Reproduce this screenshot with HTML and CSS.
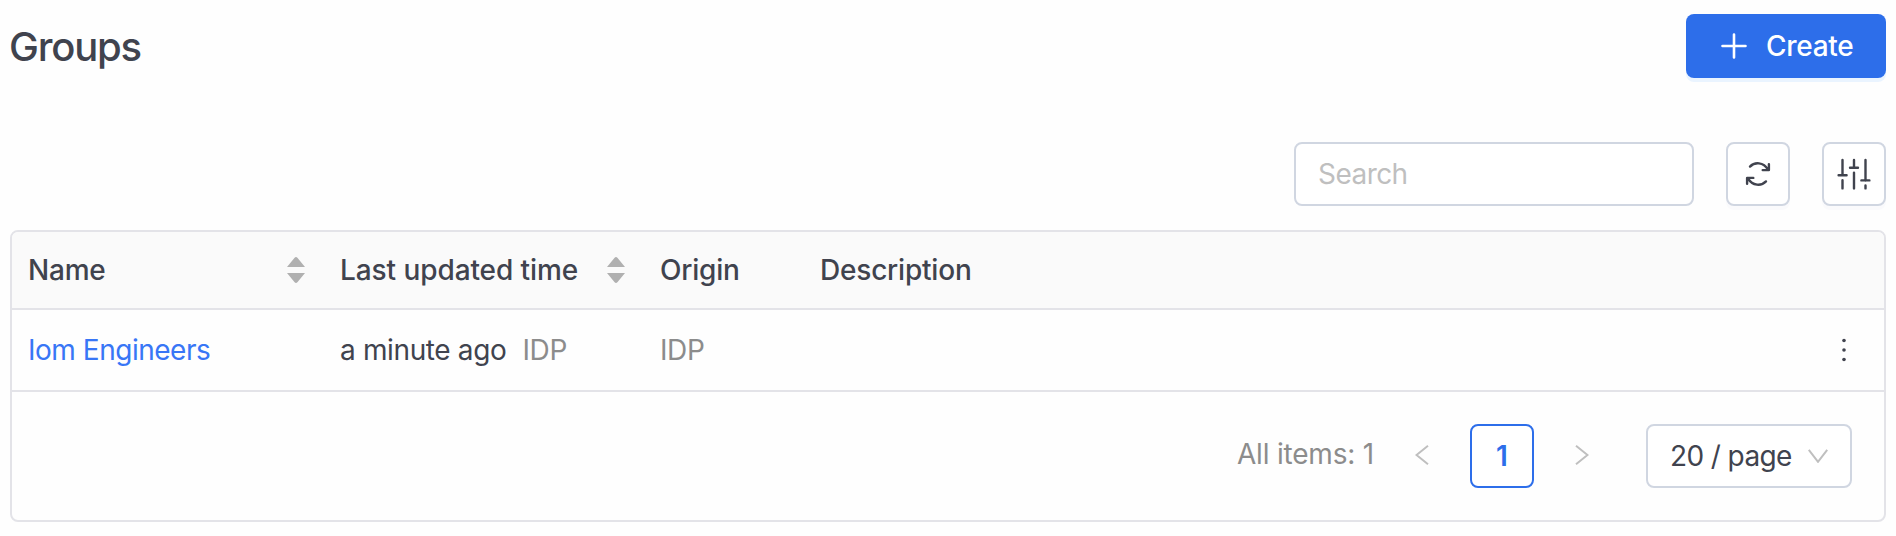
FILE: index.html
```
<!DOCTYPE html>
<html lang="en">
<head>
<meta charset="utf-8">
<title>Groups</title>
<link rel="stylesheet" href="styles.css">
</head>
<body>
<main class="page">
  <header class="page-header">
    <h1 class="title">Groups</h1>
    <button class="btn-create">
      <svg class="plus" width="26" height="26" viewBox="0 0 26 26"><path d="M13 1.5v23M1.5 13h23"/></svg>
      <span class="create-label">Create</span>
    </button>
  </header>

  <div class="toolbar">
    <input class="search" type="text" placeholder="Search">
    <button class="btn-icon" aria-label="Refresh">
      <svg width="28" height="28" viewBox="0 0 28 28"><path d="M6 6.6C10.5 1.8 19.5 1.8 24 9.6M24.9 4.2v5.9h-6.2M22 21.4C17.5 26.2 8.5 26.2 4 18.4M3.1 23.8v-5.9h6.2"/></svg>
    </button>
    <button class="btn-icon" aria-label="Columns">
      <svg width="34" height="34" viewBox="0 0 34 34"><path d="M5.5 3v14.8M1.6 18.2h8M5.5 23.2v8.2M17 3v7.6M13 10.7h8M17 15.6v15.8M28.5 3v20.6M24.4 23.4h8M28.5 28.4v3"/></svg>
    </button>
  </div>

  <section class="panel">
    <table class="grid">
      <colgroup><col class="c-name"><col class="c-time"><col class="c-origin"><col><col class="c-menu"></colgroup>
      <thead>
        <tr>
          <th><div class="head"><span>Name</span><svg class="sorter" width="18" height="26" viewBox="0 0 18 26"><path d="M0 10 7.6.8Q9-.8 10.4.8L18 10zM0 16h18l-7.6 9.2q-1.4 1.6-2.8 0z"/></svg></div></th>
          <th><div class="head"><span class="t-time">Last updated time</span><svg class="sorter" width="18" height="26" viewBox="0 0 18 26"><path d="M0 10 7.6.8Q9-.8 10.4.8L18 10zM0 16h18l-7.6 9.2q-1.4 1.6-2.8 0z"/></svg></div></th>
          <th>Origin</th>
          <th>Description</th>
          <th></th>
        </tr>
      </thead>
      <tbody>
        <tr>
          <td><a class="link">Iom Engineers</a></td>
          <td><div class="updated"><span class="ago">a minute ago</span><span class="muted">IDP</span></div></td>
          <td><span class="muted">IDP</span></td>
          <td></td>
          <td><svg class="dots" width="4" height="24" viewBox="0 0 4 24"><circle cx="2" cy="2.5" r="1.8"/><circle cx="2" cy="12" r="1.8"/><circle cx="2" cy="21.5" r="1.8"/></svg></td>
        </tr>
      </tbody>
    </table>
    <footer class="pager">
      <span class="total">All items: 1</span>
      <svg class="arrow prev" width="14" height="20" viewBox="0 0 14 20"><path d="M13 .8 1.5 10 13 19.2"/></svg>
      <span class="current">1</span>
      <svg class="arrow next" width="14" height="20" viewBox="0 0 14 20"><path d="M1 .8 12.5 10 1 19.2"/></svg>
      <div class="size">
        <span class="size-label">20 / page</span>
        <svg class="arrow" width="20" height="14" viewBox="0 0 20 14"><path d="M.8.8 10 12.8 19.2.8"/></svg>
      </div>
    </footer>
  </section>
</main>
</body>
</html>
```
FILE: styles.css
```
* { box-sizing: border-box; }
body {
  margin: 0;
  background: #fefefe;
  color: #40434e;
  font: 400 28px/40px Inter, "Liberation Sans", sans-serif;
}
svg { display: block; flex: none; }
span, a { white-space: nowrap; }
button { font: inherit; padding: 0; }

.page { padding: 14px 10px 0; }
.page-header {
  display: flex;
  justify-content: space-between;
  height: 128px;
}
.title {
  margin: 0 0 0 -1px;
  font-size: 40px;
  line-height: 66px;
  font-weight: 500;
  letter-spacing: -1.2px;
}
.btn-create {
  display: flex;
  align-items: center;
  width: 200px;
  height: 64px;
  padding-left: 35px;
  border: 0;
  border-radius: 8px;
  background: #2d6eea;
  box-shadow: 0 4px 0 #eaf4ff;
  color: #fff;
  font-weight: 500;
}
.plus { margin-right: 19px; fill: none; stroke: #fff; stroke-width: 2.6; stroke-linecap: round; }
.create-label { letter-spacing: -.3px; }

.toolbar {
  display: flex;
  justify-content: flex-end;
  gap: 32px;
  height: 88px;
}
.search {
  width: 400px;
  height: 64px;
  padding: 0 22px;
  border: 2px solid #d0d6e1;
  border-radius: 8px;
  background: #fff;
  font: inherit;
  letter-spacing: -.55px;
}
.search::placeholder { color: #bfbfbf; }
.btn-icon {
  display: flex;
  align-items: center;
  justify-content: center;
  width: 64px;
  height: 64px;
  border: 2px solid #d0d6e1;
  border-radius: 8px;
  background: #fff;
  box-shadow: 0 4px 0 #fafafc;
}
.btn-icon path { fill: none; stroke: #40434e; stroke-width: 2.4; stroke-linecap: round; stroke-linejoin: round; }

.panel {
  height: 292px;
  border: 2px solid #e3e3e8;
  border-radius: 8px;
  background: #fefefe;
  overflow: hidden;
}
.grid { width: 100%; table-layout: fixed; border-collapse: separate; border-spacing: 0; }
.c-name { width: 312px; }
.c-time { width: 320px; }
.c-origin { width: 160px; }
.c-menu { width: 80px; }
th, td {
  padding: 0 16px;
  border-bottom: 2px solid #e3e3e8;
  text-align: left;
}
th { height: 78px; background: #fafafa; font-weight: 500; letter-spacing: -.2px; }
td { height: 82px; }
.head { display: flex; justify-content: space-between; align-items: center; padding-right: 3px; }
.t-time { letter-spacing: -.08px; }
.sorter { fill: #b0b0b0; }
.link { color: #3876f6; letter-spacing: -.48px; }
.updated { display: flex; gap: 16px; }
.ago { letter-spacing: -.36px; }
.muted { color: #8c8c8c; letter-spacing: -.4px; }
.dots { margin-left: 22px; fill: #40434e; }

.pager {
  display: flex;
  align-items: center;
  justify-content: flex-end;
  height: 128px;
  padding-right: 32px;
}
.total { color: #8c8c8c; padding-bottom: 4px; letter-spacing: -.2px; }
.arrow { fill: none; stroke: #bfbfbf; stroke-width: 2; }
.prev { margin: 0 41px; position: relative; top: -1px; }
.next { margin: 0 57px 0 41px; position: relative; top: -1px; }
.current {
  width: 64px;
  height: 64px;
  border: 2px solid #2d6eea;
  border-radius: 8px;
  background: #fff;
  color: #2d6eea;
  font-weight: 600;
  line-height: 60px;
  text-align: center;
}
.size {
  display: flex;
  align-items: center;
  justify-content: space-between;
  width: 206px;
  height: 64px;
  padding: 0 22px;
  border: 2px solid #d0d6e1;
  border-radius: 8px;
  background: #fff;
}
.size-label { letter-spacing: -.6px; }
```
